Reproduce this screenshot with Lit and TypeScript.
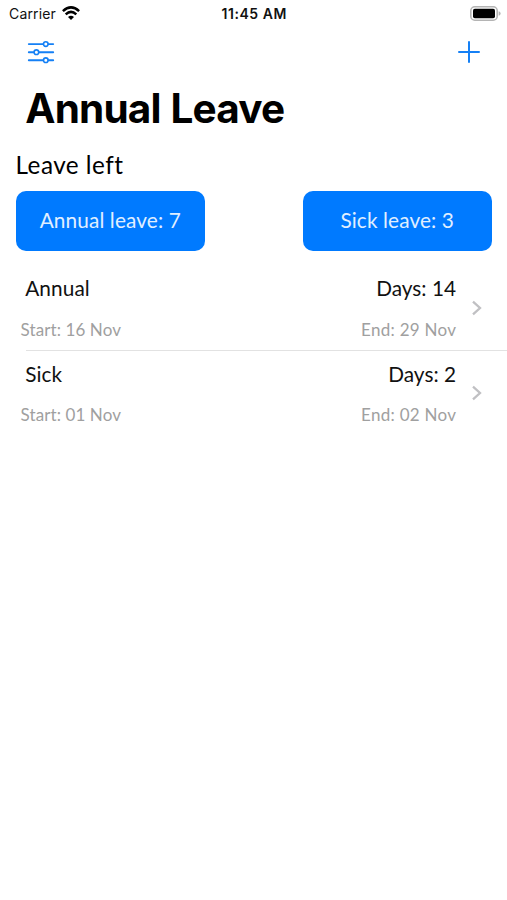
import { LitElement, html, css, svg } from "lit";
import { customElement, property } from "lit/decorators.js";

interface Leave {
  kind: string;
  days: number;
  start: string;
  end: string;
}

const leaves: Leave[] = [
  { kind: "Annual", days: 14, start: "16 Nov", end: "29 Nov" },
  { kind: "Sick", days: 2, start: "01 Nov", end: "02 Nov" },
];

@customElement("status-bar")
class StatusBar extends LitElement {
  static styles = css`
    :host {
      display: grid;
      grid-template-columns: 1fr auto 1fr;
      align-items: center;
      height: 28px;
      padding: 0 6px 0 9px;
      font: 400 14px/28px Inter, sans-serif;
      color: #111;
    }
    .left { display: flex; align-items: center; gap: 6px; }
    .carrier { letter-spacing: 0.15px; }
    .time { font-weight: 600; letter-spacing: 0.55px; margin-left: -1.5px; }
    svg { display: block; }
    .wifi { margin-top: -3px; }
    .battery { justify-self: end; margin-top: -2px; }
  `;
  render() {
    return html`
      <div class="left">
        <span class="carrier">Carrier</span>
        <svg class="wifi" width="18" height="14" viewBox="0 0 18 14">
          <g fill="none" stroke="#000" stroke-width="2.5">
            <path d="M0.9 5.1Q9-2.4 17.1 5.1" />
            <path d="M3.7 8.3Q9 3.4 14.3 8.3" />
          </g>
          <path d="M9 13.9L6 11Q9 8.4 12 11Z" />
        </svg>
      </div>
      <span class="time">11:45 AM</span>
      <svg class="battery" width="31" height="15" viewBox="0 0 31 15">
        <rect x="0.8" y="0.8" width="26.4" height="13.4" rx="4" fill="#fff" stroke="#b4b4b4" stroke-width="1.6" />
        <rect x="3" y="2.8" width="22" height="9.4" rx="1.8" />
        <path d="M28.6 5.2Q30.6 5.8 30.6 7.5T28.6 9.8Z" fill="#b4b4b4" />
      </svg>
    `;
  }
}

@customElement("leave-row")
class LeaveRow extends LitElement {
  @property({ attribute: false }) leave!: Leave;
  static styles = css`
    :host {
      display: grid;
      grid-template-columns: 1fr 51px;
      align-items: center;
      height: 85.5px;
      box-sizing: border-box;
      padding-left: 20.5px;
    }
    .line { display: flex; justify-content: space-between; }
    .main { font-size: 20.8px; line-height: 40px; color: #111; padding-left: 4.7px; }
    .dates { font-size: 17px; line-height: 26px; padding-top: 8.5px; color: #a0a0a0; }
    .text { padding-top: 3px; height: 82.5px; }
    .days { letter-spacing: 0; }
    .kind { letter-spacing: 0.1px; }
    .start { letter-spacing: 0.1px; }
    .end { letter-spacing: 0.28px; margin-right: -0.3px; }
    .chevron { display: block; margin-left: 15px; }
  `;
  render() {
    const { kind, days, start, end } = this.leave;
    return html`
      <div class="text">
        <div class="line main">
          <span class="kind">${kind}</span><span class="days">Days: ${days}</span>
        </div>
        <div class="line dates">
          <span class="start">Start: ${start}</span><span class="end">End: ${end}</span>
        </div>
      </div>
      <svg class="chevron" width="12" height="16" viewBox="0 0 12 16">
        <path d="M2 1.6L9 8L2 14.4" fill="none" stroke="#c0c0c3" stroke-width="2.3" />
      </svg>
    `;
  }
}

@customElement("app-root")
class AppRoot extends LitElement {
  static styles = css`
    :host {
      display: block;
      min-height: 100vh;
      background: #fff;
      overflow: hidden;
      font-family: Lato, sans-serif;
      color: #000;
    }
    .nav {
      display: flex;
      justify-content: space-between;
      align-items: center;
      height: 48px;
      padding: 0 27px;
    }
    .nav svg { display: block; }
    h1 {
      margin: 0;
      padding-left: 25.3px;
      font: 700 40.5px/65px Inter, sans-serif;
      letter-spacing: -0.85px;
      word-spacing: 1.2px;
    }
    h2 {
      margin: 0;
      padding-left: 15.5px;
      height: 49.5px;
      font-size: 24.3px;
      font-weight: 400;
      line-height: 48px;
      letter-spacing: 0.48px;
    }
    .balances {
      display: flex;
      justify-content: space-between;
      padding: 0 15px 0 15.5px;
    }
    .balance {
      width: 189.5px;
      height: 60.5px;
      border: 0;
      border-radius: 10px;
      padding: 0 0 1px;
      background: #007aff;
      color: #e0efff;
      font: 400 20.8px/58px Lato, sans-serif;
      letter-spacing: 0.12px;
    }
    .list { padding-top: 14px; }
    .separator { height: 1px; margin: -1px 0 0 26px; background: #e2e2e2; }
  `;
  render() {
    return html`
      <status-bar></status-bar>
      <div class="nav">
        <svg width="28" height="24" viewBox="0 0 28 24" fill="none" stroke="#1580f5">
          <g stroke-width="1.9" stroke-linecap="round">
            <path d="M1.8 4.1H16M21.5 4.1H26.2M1.8 12.2H6.6M12.1 12.2H26.2M1.8 20.2H16M21.5 20.2H26.2" />
          </g>
          <g stroke-width="1.6">
            ${[[18.8, 4.1], [9.4, 12.2], [18.8, 20.2]].map(
              ([x, y]) => svg`<circle cx=${x} cy=${y} r="2.3" />`
            )}
          </g>
        </svg>
        <svg width="22" height="22" viewBox="0 0 22 22">
          <path d="M11 1V21M1 11H21" stroke="#1580f5" stroke-width="2" stroke-linecap="round" />
        </svg>
      </div>
      <h1>Annual Leave</h1>
      <h2>Leave left</h2>
      <div class="balances">
        <button class="balance">Annual leave: 7</button>
        <button class="balance">Sick leave: 3</button>
      </div>
      <div class="list">
        ${leaves.map(
          (leave, i) => html`
            ${i ? html`<div class="separator"></div>` : null}
            <leave-row .leave=${leave}></leave-row>
          `
        )}
      </div>
    `;
  }
}
